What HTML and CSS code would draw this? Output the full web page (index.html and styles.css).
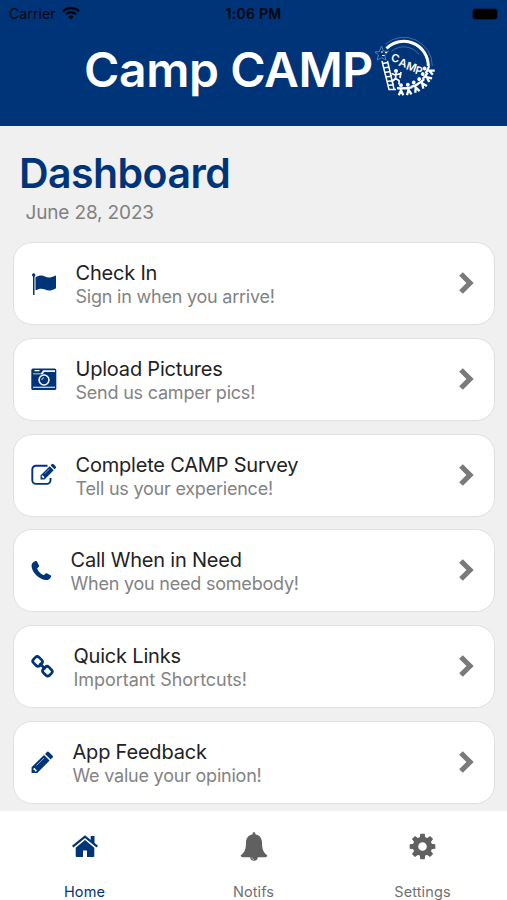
FILE: index.html
```
<!DOCTYPE html>
<html lang="en">
<head>
    <meta charset="UTF-8">
    <meta name="viewport" content="width=device-width, initial-scale=1.0">
    <title>Camp CAMP</title>
    <link rel="stylesheet" href="styles.css">
</head>
<body>
    <header class="header">
        <div class="status-bar">
            <div class="carrier">
                <span>Carrier</span>
                <svg width="18" height="14" viewBox="0 0 18 14" fill="none" stroke="#000610" stroke-width="2.5">
                    <path d="M1 5.2a11.6 11.6 0 0 1 16 0"/>
                    <path d="M3.9 8.3a7.4 7.4 0 0 1 10.2 0"/>
                    <path d="M9 13.6L6.2 10.7a4 4 0 0 1 5.6 0z" fill="#000610" stroke="none"/>
                </svg>
            </div>
            <span class="time">1:06 PM</span>
            <div class="battery-wrap"><div class="battery"></div></div>
        </div>
        <div class="brand">
            <h1>Camp CAMP</h1>
            <svg class="logo" width="64" height="64" viewBox="0 0 64 64" fill="none" stroke="#fff">
                <path d="M11.500 9A28.500 28.500 0 0 1 58.300 31" stroke="#4f78a8" stroke-width=".8"/>
                <path d="M17.500 16.300A19 19 0 0 1 45 19.500" stroke="#4f78a8" stroke-width=".8"/>
                <path d="M12.500 13.500A24.500 24.500 0 0 1 54.300 31" stroke-width="3"/>
                <path d="M7.500 11l2 5 5 .5-3.800 3.300 1.200 5.200-4.200-2.300-4.500 2.300 1.300-5-3.500-3 4.500-.5z" stroke="#6f94bd" stroke-width=".8"/>
                <path d="M7 17h2M8 20.500h2.500M11 17.500h2" stroke-width="1.200"/>
                <path d="M8 26l7 28.500h7M13.500 26l6.500 28M8.500 28.500l6-1M9.500 33l6-1M10.500 37.500l6-1M12 42l6-1M13 46.500l6-1M14 50.500l6-1" stroke-width="1.500"/>
                <path d="M17.500 38.500l4 1.500 5-1.500M22 38l-.5 5.500-4 3.500M21.500 43.500l3.500 2v4M27 37l-1 6" stroke-width="1.700"/>
                <circle cx="22" cy="36" r="2" fill="#fff" stroke="none"/>
                <defs>
                    <g id="kid">
                        <circle cy="-4.800" r="1.900" fill="#fff" stroke="none"/>
                        <path d="M-4-1.800L0-1.500l4-.3M0-2.500v4M-.3 1l-2 4.300M.3 1l2 4.300" stroke-width="2.300"/>
                    </g>
                </defs>
                <use href="#kid" transform="translate(27 55)"/>
                <use href="#kid" transform="translate(34.500 54.500) rotate(-8)"/>
                <use href="#kid" transform="translate(41.500 52) rotate(-22)"/>
                <use href="#kid" transform="translate(48 48) rotate(-36)"/>
                <use href="#kid" transform="translate(52.500 42) rotate(-52)"/>
                <use href="#kid" transform="translate(55 35.500) rotate(-65)"/>
                <g class="logo-text">
                    <text transform="translate(16.500 26) rotate(14)">C</text>
                    <text transform="translate(24 30.500) rotate(16)">A</text>
                    <text transform="translate(31.500 34) rotate(18)">M</text>
                    <text transform="translate(40.500 38.500) rotate(14)">P</text>
                </g>
            </svg>
        </div>
    </header>

    <main class="content">
        <h2>Dashboard</h2>
        <p class="date">June 28, 2023</p>

        <div class="cards">
            <div class="card">
                <svg class="icon" width="26" height="26" viewBox="0 0 26 26">
                    <circle cx="2.700" cy="4" r="1.700"/>
                    <path d="M2 4h1.500v20H2z"/>
                    <path d="M4.500 6.300C8 4.200 11 4 14 5.500c3 1.500 6 1.200 10-.8.600-.3 1 0 1 .5v11.500c0 .5-.2.700-.7 1-4 2-7 2.300-10.300.8-3-1.400-6-1-9.500.8z"/>
                </svg>
                <div class="card-text">
                    <h3>Check In</h3>
                    <p>Sign in when you arrive!</p>
                </div>
                <svg class="chevron" width="17" height="24" viewBox="0 0 17 24"><path d="M3 3l9 9-9 9"/></svg>
            </div>
            <div class="card">
                <svg class="icon" width="26" height="26" viewBox="0 0 26 26">
                    <rect x=".3" y="2.500" width="25" height="21.500" rx="1.600"/>
                    <path d="M2 7.500h8l2-3.300h12V6H13l-1 2.300H2zM2 20.700h22v1H2zM3.500 4h5v1.200h-5z" fill="#fff"/>
                    <circle cx="13" cy="14" r="5.700" fill="#fff"/>
                    <circle cx="13" cy="14" r="4.200"/>
                    <path d="M10.800 14a2.200 2.200 0 0 1 2.200-2.200" fill="none" stroke="#fff" stroke-width=".8"/>
                </svg>
                <div class="card-text">
                    <h3>Upload Pictures</h3>
                    <p>Send us camper pics!</p>
                </div>
                <svg class="chevron" width="17" height="24" viewBox="0 0 17 24"><path d="M3 3l9 9-9 9"/></svg>
            </div>
            <div class="card">
                <svg class="icon" width="26" height="26" viewBox="0 0 26 26">
                    <path d="M16.500 3.700H5A3.700 3.700 0 0 0 1.300 7.400v10.800A3.700 3.700 0 0 0 5 21.900h10.800a3.700 3.700 0 0 0 3.700-3.700V16" fill="none" stroke="#003478" stroke-width="1.900"/>
                    <path d="M9.500 13.500L18.700 4.300l4 4-9.200 9.200h-4zM19.600 3.400l1.100-1.100a1.300 1.300 0 0 1 1.900 0l2 2a1.300 1.300 0 0 1 0 1.900l-1.100 1.100z"/>
                    <path d="M10.700 14.200v1h1v1h.8l1-1-1.800-1.900z" fill="#fff"/>
                    <path d="M13.500 11.800l5-5" stroke="#fff" stroke-width=".5"/>
                </svg>
                <div class="card-text">
                    <h3>Complete CAMP Survey</h3>
                    <p>Tell us your experience!</p>
                </div>
                <svg class="chevron" width="17" height="24" viewBox="0 0 17 24"><path d="M3 3l9 9-9 9"/></svg>
            </div>
            <div class="card">
                <svg class="icon icon-phone" width="21" height="26" viewBox="0 0 21 26">
                    <path d="M4.700 3.100c.7-.3 1.100 0 1.400.7L8 7.500c.3.700.1 1.100-.4 1.600C6.800 9.900 6 10.200 6.300 11c1.300 2.700 3.300 4.700 6 6 .8.400 1.200-.5 2-1.300.4-.5.900-.7 1.500-.4l3.700 2c.6.300.7.700.5 1.400-.8 2.500-3 3.600-5.500 3.300C7.600 21 1.500 14.900.6 8.500.2 6 2 3.800 4.700 3.100z"/>
                </svg>
                <div class="card-text">
                    <h3>Call When in Need</h3>
                    <p>When you need somebody!</p>
                </div>
                <svg class="chevron" width="17" height="24" viewBox="0 0 17 24"><path d="M3 3l9 9-9 9"/></svg>
            </div>
            <div class="card">
                <svg class="icon icon-link" width="24" height="26" viewBox="0 0 24 26">
                    <g fill="none" stroke="#003478" stroke-width="2.700">
                        <rect x="-4.400" y="-3.900" width="8.800" height="7.800" rx="2.600" transform="translate(6.600 7.400) rotate(45)"/>
                        <rect x="-4.400" y="-3.900" width="8.800" height="7.800" rx="2.600" transform="translate(16.400 17.200) rotate(45)"/>
                        <path d="M8.500 9.300l6 6"/>
                    </g>
                </svg>
                <div class="card-text">
                    <h3>Quick Links</h3>
                    <p class="links-sub">Important Shortcuts!</p>
                </div>
                <svg class="chevron" width="17" height="24" viewBox="0 0 17 24"><path d="M3 3l9 9-9 9"/></svg>
            </div>
            <div class="card">
                <svg class="icon icon-pencil" width="23" height="26" viewBox="0 0 23 26">
                    <g transform="translate(.3 1.800) scale(.94)">
                        <path d="M.3 17.500L13.500 4.400l6 6L6.300 23.500h-6zM14.600 3.300l1.800-1.800a1.700 1.700 0 0 1 2.500 0l3.500 3.500a1.700 1.700 0 0 1 0 2.500l-1.800 1.800z"/>
                        <path d="M2.300 18.900v1.400h1.400v1.600h1.300l1-1-2.800-3z" fill="#fff"/>
                        <path d="M5.500 15.700l8-8" stroke="#fff" stroke-width=".6"/>
                    </g>
                </svg>
                <div class="card-text">
                    <h3>App Feedback</h3>
                    <p>We value your opinion!</p>
                </div>
                <svg class="chevron" width="17" height="24" viewBox="0 0 17 24"><path d="M3 3l9 9-9 9"/></svg>
            </div>
        </div>
    </main>

    <nav class="tabs">
        <div class="tab tab-active">
            <svg width="30" height="30" viewBox="0 0 30 30">
                <path d="M15 9l9.300 7.700V25a1 1 0 0 1-1 1H17v-6.500h-4V26H6.700a1 1 0 0 1-1-1v-8.300z"/>
                <path d="M2.700 15.700L15 5.700l12.300 10" fill="none" stroke="#003478" stroke-width="2.200"/>
                <path d="M20.700 5h3.800v8l-3.800-3.200z"/>
            </svg>
            <span>Home</span>
        </div>
        <div class="tab">
            <svg width="30" height="30" viewBox="0 0 30 30">
                <path d="M15 1.300c.8 0 1.300.5 1.300 1.200v.8c4.200.8 6.700 4 6.700 8 0 7 1.300 10.200 5.300 13 0 1.200-.9 2-2 2H3.700c-1.100 0-2-.8-2-2C5.700 21.500 7 18.300 7 11.300c0-4 2.500-7.200 6.700-8v-.8c0-.7.500-1.200 1.300-1.200z"/>
                <path d="M11.200 26h7.600a3.800 3.800 0 0 1-7.600 0z"/>
                <path d="M12.700 26.500a2.400 2.400 0 0 0 2.300 2" fill="none" stroke="#fff" stroke-width=".5"/>
            </svg>
            <span>Notifs</span>
        </div>
        <div class="tab">
            <svg width="30" height="30" viewBox="0 0 30 30">
                <g transform="translate(14.500 15.500)">
                    <circle r="7" fill="none" stroke="#606060" stroke-width="5.400"/>
                    <g id="teeth">
                        <path d="M-2.800-8.500l.6-4.300h4.400l.6 4.300zM-2.800 8.500l.6 4.300h4.400l.6-4.300zM-8.500-2.800l-4.300.6v4.400l4.300.6zM8.500-2.800l4.300.6v4.400l-4.300.6z"/>
                    </g>
                    <use href="#teeth" transform="rotate(45)"/>
                </g>
            </svg>
            <span>Settings</span>
        </div>
    </nav>
</body>
</html>
```

FILE: styles.css
```
* {
    box-sizing: border-box;
}

body {
    margin: 0;
    height: 900px;
    display: flex;
    flex-direction: column;
    overflow: hidden;
    background-color: #f0f0f0;
    font-family: Inter, "Liberation Sans", sans-serif;
}

h1, h2, h3, p {
    margin: 0;
}

.header {
    flex: none;
    height: 126px;
    background-color: #003478;
}

.status-bar {
    height: 28px;
    padding: 0 10px 0 9px;
    display: grid;
    grid-template-columns: 1fr auto 1fr;
    align-items: center;
    color: #000610;
    font-size: 14px;
}

.carrier {
    display: flex;
    gap: 6px;
    align-items: center;
    line-height: 14px;
}

.carrier span {
    margin-top: -1px;
    letter-spacing: 0.1px;
}

.carrier svg {
    margin-top: -3px;
}

.time {
    margin: -2px 0 0 1px;
    font-size: 14px;
    font-weight: 600;
    letter-spacing: 0.3px;
}

.battery-wrap {
    display: flex;
    justify-content: flex-end;
}

.battery {
    width: 24px;
    height: 10px;
    margin-top: -1px;
    border-radius: 3px;
    background-color: #000;
    box-shadow: 0 0 0 1px #002352;
}

.brand {
    display: flex;
    padding: 7px 0 0 84px;
}

h1 {
    height: 70px;
    width: 290px;
    color: #fff;
    font-size: 48px;
    font-weight: 600;
    line-height: 69px;
    letter-spacing: -0.4px;
    white-space: nowrap;
}

.logo-text {
    fill: #fff;
    stroke: none;
    font-size: 11px;
    font-weight: 600;
}

.content {
    flex: 1;
    min-height: 0;
    padding: 22px 12.5px 0;
    overflow: hidden;
}

h2 {
    padding-left: 6.5px;
    color: #003478;
    font-size: 41px;
    font-weight: 600;
    line-height: 51px;
    letter-spacing: -0.55px;
}

.date {
    padding-left: 13px;
    color: #808080;
    font-size: 19px;
    line-height: 28px;
    letter-spacing: -0.15px;
}

.cards {
    margin-top: 15px;
    display: flex;
    flex-direction: column;
    gap: 12.75px;
}

.card {
    height: 83px;
    padding: 0 19px 0 17.5px;
    display: flex;
    align-items: center;
    background-color: #fff;
    border: 1px solid #e0e0e0;
    border-radius: 19px;
}

.icon {
    flex: none;
    width: 26px;
    fill: #003478;
}

.icon-phone {
    width: 21px;
}

.icon-link {
    width: 24px;
}

.icon-pencil {
    width: 23px;
}

.card-text {
    flex: 1;
    margin-left: 18.5px;
    padding-top: 3px;
}

.card h3 {
    color: #222;
    font-size: 20px;
    font-weight: 400;
    line-height: 23px;
    letter-spacing: -0.2px;
}

.card p {
    color: #838383;
    font-size: 18px;
    line-height: 23px;
    letter-spacing: -0.22px;
}

.card .links-sub {
    letter-spacing: -0.04px;
}

.chevron {
    margin-top: -1px;
    fill: none;
    stroke: #7a7a7a;
    stroke-width: 5.2;
}

.tabs {
    flex: none;
    height: 89px;
    display: grid;
    grid-template-columns: repeat(3, 1fr);
    background-color: #fff;
}

.tab {
    padding-top: 20px;
    display: flex;
    flex-direction: column;
    align-items: center;
    fill: #606060;
    color: #707070;
    font-size: 14.5px;
}

.tab span {
    margin-top: 21px;
    line-height: 20px;
    letter-spacing: 0.1px;
}

.tab-active {
    fill: #003478;
    color: #003478;
}
```
